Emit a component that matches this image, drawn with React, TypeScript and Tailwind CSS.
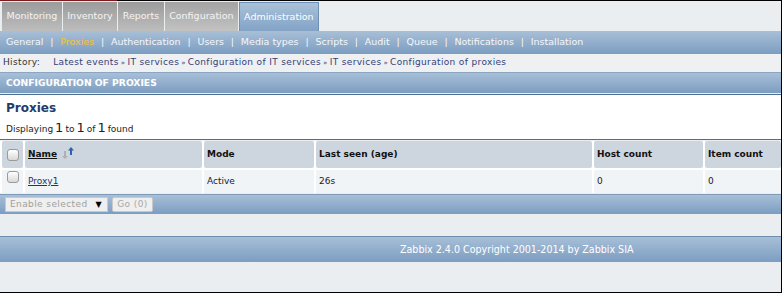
import React from "react";

const TABS = ["Monitoring", "Inventory", "Reports", "Configuration"];
const SUB = ["General", "Proxies", "Authentication", "Users", "Media types", "Scripts", "Audit", "Queue", "Notifications", "Installation"];
const HISTORY = ["Latest events", "IT services", "Configuration of IT services", "IT services", "Configuration of proxies"];

function Checkbox() {
  return <span className="block h-[12px] w-[12px] rounded-[3px] border border-[#9a9a9a] bg-gradient-to-b from-[#ffffff] to-[#d8d8d8]" />;
}

function SortArrows() {
  return (
    <svg width="14" height="14" viewBox="0 0 14 14" className="ml-[4px] -mt-[4px]">
      <path d="M3 5h2v5h2l-3 3-3-3h2z" fill="#b0b0b0" />
      <path d="M10 1l3 3.5h-2V9H9V4.5H7z" fill="#2f63a8" />
    </svg>
  );
}

export default function App() {
  return (
    <div className="relative h-[293px] w-[782px] overflow-hidden border-b border-r border-black bg-[#ebeef1] font-['DejaVu_Sans',sans-serif] text-[9.5px]">
      {/* top edge */}
      <div className="flex h-px">
        <div className="w-[117px] bg-[#7a1a1a]" />
        <div className="flex-1 bg-black" />
      </div>

      {/* main menu */}
      <div className="mt-px flex h-[29px] gap-px pl-[2px]">
        {TABS.map((t) => (
          <div
            key={t}
            className={`flex items-center bg-gradient-to-b px-[4.5px] text-[#f4f4f4] ${
              t === "Configuration" ? "from-[#a3a3a3] to-[#c2c2c2]" : "from-[#9b9b9b] to-[#bdbdbd]"
            }`}
          >
            {t}
          </div>
        ))}
        <div className="flex items-center border border-b-0 border-[#6f90b4] bg-gradient-to-b from-[#a9c1d9] to-[#83a3c6] px-[4px] text-white">
          Administration
        </div>
      </div>

      {/* sub menu */}
      <div className="flex h-[23px] items-center bg-gradient-to-b from-[#a8bfd7] to-[#7c9dc1] pl-[6px] text-[#f5f7fa]">
        {SUB.map((s, i) => (
          <React.Fragment key={s}>
            {i > 0 && <span className="mx-[6.8px]">|</span>}
            <span className={s === "Proxies" ? "text-[#f2c531]" : ""}>{s}</span>
          </React.Fragment>
        ))}
      </div>

      {/* history */}
      <div className="flex h-[19px] items-center border-b border-[#8aa6c3] bg-[#eef0f2] pl-[3px] text-[9px] tracking-[0.35px] text-[#333]">
        <span className="mr-[13px]">History:</span>
        {HISTORY.map((h, i) => (
          <React.Fragment key={i}>
            {i > 0 && <span className="mx-[2px] text-[7px] text-[#35407a]">»</span>}
            <span className="text-[#35407a]">{h}</span>
          </React.Fragment>
        ))}
      </div>

      {/* page header */}
      <div className="flex h-[20px] items-center bg-gradient-to-b from-[#a8bfd7] to-[#7c9dc1] pl-[6px] text-[9.2px] font-bold text-white">
        CONFIGURATION OF PROXIES
      </div>

      {/* title box */}
      <div className="mt-[1px] flex h-[46px] flex-col border-y border-[#4f7090] bg-white pl-[6px]">
        <div className="mt-[4px] text-[12px] font-bold text-[#1f3d6b]">Proxies</div>
        <div className="mt-[1px] flex items-baseline text-[9px] text-[#222]">
          Displaying <span className="mx-[2px] text-[13px]">1</span> to <span className="mx-[2px] text-[13px]">1</span> of <span className="mx-[2px] text-[13px]">1</span> found
        </div>
      </div>

      {/* table */}
      <div className="mt-[1px] grid grid-cols-[21px_177px_110px_276px_109px_1fr] gap-[2px] bg-white pl-[2px] text-[9px]">
        <div className="flex h-[27px] items-center justify-center rounded-[2px] bg-[#cdd6df]">
          <Checkbox />
        </div>
        <div className="flex items-center rounded-[2px] bg-[#cdd6df] pl-[3px] font-bold text-[#111]">
          <span className="underline">Name</span>
          <SortArrows />
        </div>
        <div className="flex items-center rounded-[2px] bg-[#cdd6df] pl-[3px] font-bold text-[#111]">Mode</div>
        <div className="flex items-center rounded-[2px] bg-[#cdd6df] pl-[3px] font-bold text-[#111]">Last seen (age)</div>
        <div className="flex items-center rounded-[2px] bg-[#cdd6df] pl-[3px] font-bold text-[#111]">Host count</div>
        <div className="flex items-center rounded-[2px] bg-[#cdd6df] pl-[3px] font-bold text-[#111]">Item count</div>

        <div className="flex h-[23px] items-start justify-center bg-[#f0f4f7] pt-[1px]">
          <Checkbox />
        </div>
        <div className="flex items-center bg-[#f0f4f7] pl-[3px] text-[#27306b] underline">Proxy1</div>
        <div className="flex items-center bg-[#f0f4f7] pl-[3px] text-[#222]">Active</div>
        <div className="flex items-center bg-[#f0f4f7] pl-[3px] text-[#222]">26s</div>
        <div className="flex items-center bg-[#f0f4f7] pl-[3px] text-[#222]">0</div>
        <div className="flex items-center bg-[#f0f4f7] pl-[3px] text-[#222]">0</div>
      </div>

      {/* table footer */}
      <div className="mt-[1px] flex h-[20px] items-center gap-[4px] border-t border-[#7f9bb8] bg-gradient-to-b from-[#a8bfd7] to-[#7c9dc1] pl-[5px] text-[9px] tracking-[0.4px]">
        <div className="flex h-[15px] w-[103px] items-center justify-between border border-[#c9c9c9] bg-[#efefef] pl-[4px] pr-[5px] text-[#a0a0a0]">
          <span>Enable selected</span>
          <span className="text-[8px] text-black">▼</span>
        </div>
        <div className="flex h-[15px] w-[41px] items-center justify-center rounded-[2px] border border-[#c9c9c9] bg-[#efefef] text-[#a8a8a8]">
          Go (0)
        </div>
      </div>

      <div className="h-[22px]" />

      {/* footer */}
      <div className="flex h-[26px] items-center border-t border-[#6e8eae] bg-gradient-to-b from-[#a8bfd7] to-[#7c9dc1] pl-[400px] font-['DejaVu_Sans_Condensed',sans-serif] text-[10.6px] text-white [font-stretch:condensed]">
        Zabbix 2.4.0 Copyright 2001-2014 by Zabbix SIA
      </div>
    </div>
  );
}
